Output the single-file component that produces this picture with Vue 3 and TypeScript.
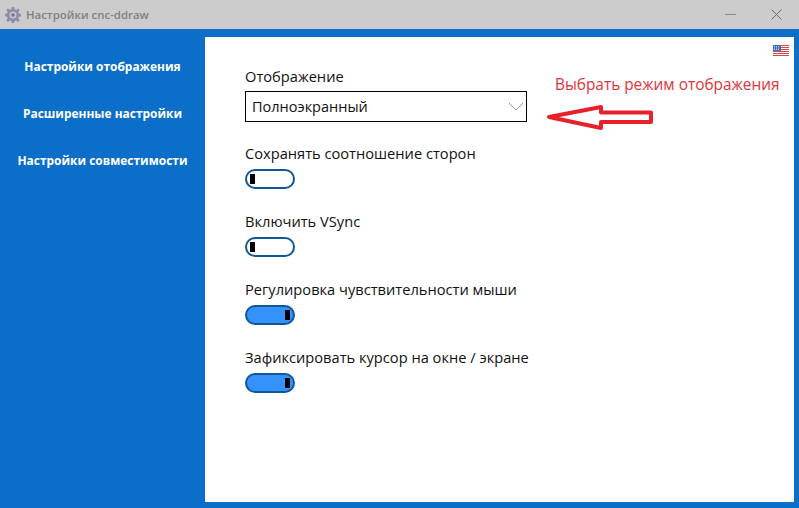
<template>
  <div class="window">
    <header class="title-bar">
      <svg class="app-icon" viewBox="0 0 16 16">
        <path fill="#8d8da6" d="M6.800 0h2.400l.4 2.300 1.500.6 2-1.400 1.600 1.600-1.400 2 .6 1.500 2.100.4v2.400l-2.100.4-.6 1.500 1.400 2-1.600 1.600-2-1.400-1.500.6-.4 2.300H6.800l-.4-2.300-1.500-.6-2 1.400-1.600-1.600 1.400-2-.6-1.500L0 9.200V6.800l2.100-.4.6-1.500-1.400-2 1.600-1.600 2 1.400 1.500-.6z" />
        <circle cx="8" cy="8" r="3.600" fill="#c2c2d8" />
        <circle cx="8" cy="8" r="1.700" fill="#71718a" />
      </svg>
      <span class="title-text">Настройки cnc-ddraw</span>
      <span class="title-spacer"></span>
      <span class="win-btn">
        <svg width="11" height="11" viewBox="0 0 11 11"><path d="M0 5.500h11" stroke="#8a8a8a" stroke-width="1" /></svg>
      </span>
      <span class="win-btn close">
        <svg width="11" height="11" viewBox="0 0 11 11"><path d="M.5.500l10 10M10.500.500l-10 10" stroke="#6e6e6e" stroke-width="1" fill="none" /></svg>
      </span>
    </header>

    <div class="body">
      <nav class="sidebar">
        <a v-for="item in navItems" :key="item" class="nav-item">{{ item }}</a>
      </nav>

      <main class="panel">
        <svg class="flag" viewBox="0 0 16 11">
          <rect width="16" height="11" fill="#f3f3f3" />
          <path d="M0 .500h16M0 2.500h16M0 4.500h16M0 6.500h16M0 8.500h16M0 10.500h16" stroke="#d8474a" stroke-width="1" />
          <rect width="8" height="6" fill="#3a6fc0" />
          <path d="M1 1.500h6M1 3h6M1 4.500h6" stroke="#fff" stroke-width=".7" stroke-dasharray="1 1" />
        </svg>

        <form class="settings" @submit.prevent>
          <div class="field display-field">
            <label class="field-label">Отображение</label>
            <div class="select">
              <span>Полноэкранный</span>
              <svg width="16" height="9" viewBox="0 0 16 9"><path d="M1 1l7 7 7-7" fill="none" stroke="#999999" stroke-width="1" /></svg>
            </div>
          </div>

          <div v-for="row in toggles" :key="row.label" class="field">
            <label class="field-label">{{ row.label }}</label>
            <button type="button" :class="['toggle', { on: row.on }]" @click="row.on = !row.on">
              <span class="knob"></span>
            </button>
          </div>
        </form>

        <div class="note">Выбрать режим отображения</div>
        <svg class="note-arrow" viewBox="0 0 110 26">
          <path d="M3 13 L55 3 L55 8.500 L105 8.500 L105 18 L55 18 L55 24 Z" fill="#fff" stroke="#e8202a" stroke-width="4" stroke-linejoin="round" />
        </svg>
      </main>
    </div>
  </div>
</template>

<script setup lang="ts">
import { reactive } from 'vue'

interface ToggleRow {
  label: string
  on: boolean
}

const navItems = ['Настройки отображения', 'Расширенные настройки', 'Настройки совместимости']

const toggles = reactive<ToggleRow[]>([
  { label: 'Сохранять соотношение сторон', on: false },
  { label: 'Включить VSync', on: false },
  { label: 'Регулировка чувствительности мыши', on: true },
  { label: 'Зафиксировать курсор на окне / экране', on: true }
])
</script>

<style>
html,
body {
  margin: 0;
  overflow: hidden;
}
</style>

<style scoped>
* {
  box-sizing: border-box;
}

.window {
  width: 799px;
  height: 508px;
  display: flex;
  flex-direction: column;
  background: #0b6fc9;
  font-family: "Open Sans", "Noto Sans", sans-serif;
}

.title-bar {
  height: 29px;
  flex-shrink: 0;
  display: flex;
  align-items: center;
  padding-left: 5px;
  background: #cccccc;
}

.app-icon {
  width: 16px;
  height: 16px;
  margin-right: 5px;
}

.title-text {
  font-size: 11.400px;
  font-weight: 600;
  color: #808080;
}

.title-spacer {
  flex: 1;
}

.win-btn {
  width: 46px;
  height: 29px;
  display: flex;
  align-items: center;
  justify-content: center;
}

.body {
  flex: 1;
  min-height: 0;
  display: flex;
  padding: 8px 5px 6px 0;
}

.sidebar {
  width: 205px;
  flex-shrink: 0;
  display: flex;
  flex-direction: column;
  align-items: center;
  gap: 27px;
  padding-top: 20px;
}

.nav-item {
  height: 20px;
  line-height: 20px;
  font-size: 11.950px;
  font-weight: 700;
  color: #ffffff;
  white-space: nowrap;
}

.panel {
  flex: 1;
  position: relative;
  background: #ffffff;
}

.flag {
  position: absolute;
  top: 8px;
  right: 5px;
  width: 16px;
  height: 11px;
}

.settings {
  display: flex;
  flex-direction: column;
  padding: 29px 0 0 40px;
}

.field {
  display: flex;
  flex-direction: column;
  align-items: flex-start;
}

.field + .field {
  margin-top: 22px;
}

.display-field + .field {
  margin-top: 21px;
}

.field-label {
  height: 20px;
  line-height: 20px;
  font-size: 14.650px;
  color: #111111;
  white-space: nowrap;
}

.display-field .field-label {
  margin-bottom: 5px;
}

.select {
  width: 282px;
  height: 31px;
  display: flex;
  align-items: center;
  justify-content: space-between;
  padding: 0 1px 0 6px;
  border: 1px solid #000000;
  font-size: 14.500px;
  color: #111111;
}

.select svg {
  margin-right: 1px;
}

.toggle {
  width: 50px;
  height: 20px;
  margin-top: 6px;
  padding: 0 3px;
  display: flex;
  align-items: center;
  justify-content: flex-start;
  border: 2px solid #0f5796;
  border-radius: 10px;
  background: #ffffff;
  cursor: pointer;
}

.toggle.on {
  justify-content: flex-end;
  background: #3591fb;
}

.knob {
  width: 5px;
  height: 10px;
  background: #000000;
}

.note {
  position: absolute;
  left: 350px;
  top: 37px;
  font-size: 15.400px;
  line-height: 22px;
  color: #e0353b;
  white-space: nowrap;
}

.note-arrow {
  position: absolute;
  left: 341px;
  top: 67px;
  width: 110px;
  height: 26px;
}
</style>
